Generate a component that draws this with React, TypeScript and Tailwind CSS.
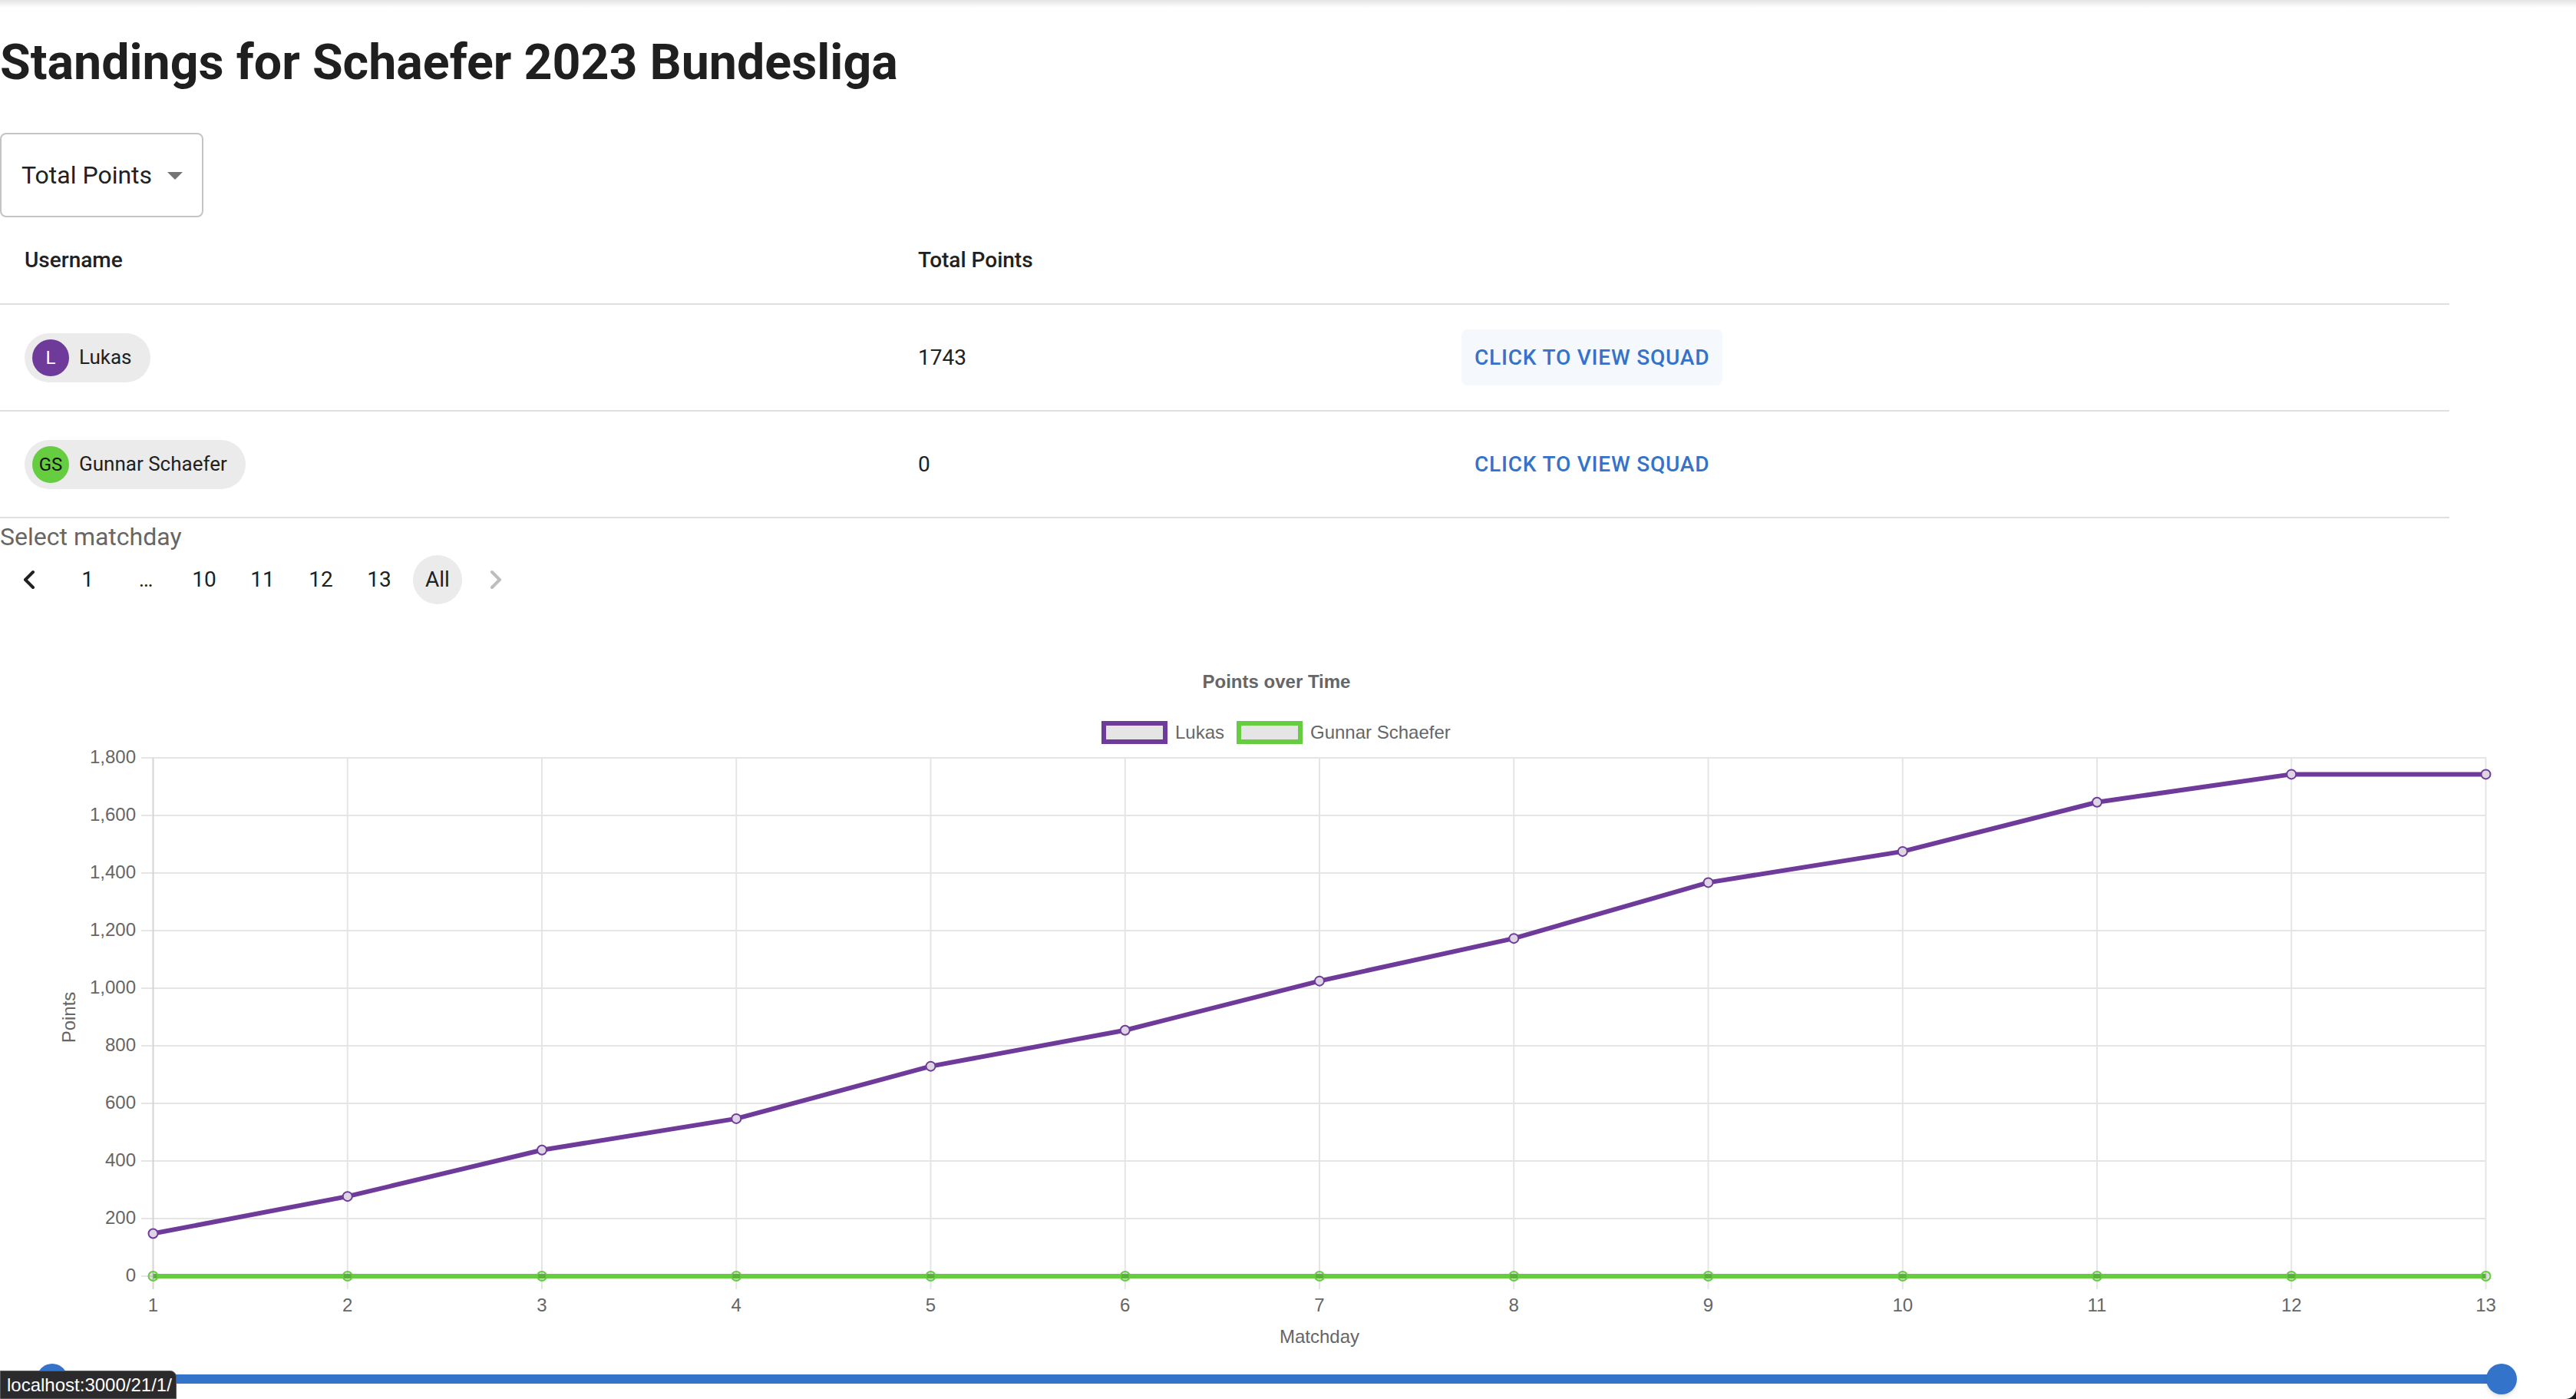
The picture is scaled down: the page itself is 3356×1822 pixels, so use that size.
import React from 'react';
import { ChevronLeft, ChevronRight } from 'lucide-react';

const purple = '#6f3b9a';
const green = '#66cc40';
const blue = '#3473ca';

type Row = {
  name: string;
  initials: string;
  avatarBg: string;
  avatarText: string;
  points: number;
  hovered?: boolean;
};

const rows: Row[] = [
  { name: 'Lukas', initials: 'L', avatarBg: purple, avatarText: 'text-white', points: 1743, hovered: true },
  { name: 'Gunnar Schaefer', initials: 'GS', avatarBg: green, avatarText: 'text-[#111]', points: 0 },
];

const pages = ['prev', '1', '…', '10', '11', '12', '13', 'All', 'next'];

// points per matchday, read off the chart
const lukasPoints = [148, 277, 438, 547, 729, 854, 1025, 1173, 1367, 1475, 1646, 1743, 1743];
const ticks = [0, 200, 400, 600, 800, 1000, 1200, 1400, 1600, 1800];

const xAt = (i: number) => 199.5 + i * 253.25;
const yAt = (v: number) => 1663 - v * 0.375;

function PointsChart() {
  const purpleLine = lukasPoints.map((v, i) => `${xAt(i)},${yAt(v)}`).join(' ');

  return (
    <svg
      width={3356}
      height={982}
      viewBox="0 788 3356 982"
      className="block"
      fontFamily="'Liberation Sans', Arial, sans-serif"
    >
      <text x={1663} y={888} textAnchor="middle" dominantBaseline="central" fontSize={24} fontWeight={700} fill="#666">
        Points over Time
      </text>

      {/* legend */}
      <rect x={1438} y={943} width={80} height={24} fill="#e5e5e5" stroke={purple} strokeWidth={6} />
      <text x={1531} y={954} dominantBaseline="central" fontSize={24} fill="#666">Lukas</text>
      <rect x={1614} y={943} width={80} height={24} fill="#e5e5e5" stroke={green} strokeWidth={6} />
      <text x={1707} y={954} dominantBaseline="central" fontSize={24} fill="#666">Gunnar Schaefer</text>

      {/* y grid + labels */}
      {ticks.map(v => (
        <g key={v}>
          <line x1={184} x2={3239} y1={yAt(v)} y2={yAt(v)} stroke="#e5e5e5" strokeWidth={2} />
          <text x={177} y={yAt(v) - 2} textAnchor="end" dominantBaseline="central" fontSize={24} fill="#666">
            {v.toLocaleString('en-US')}
          </text>
        </g>
      ))}

      {/* x grid + labels */}
      {lukasPoints.map((_, i) => (
        <g key={i}>
          <line
            x1={xAt(i)}
            x2={xAt(i)}
            y1={988}
            y2={1680}
            stroke={i === 0 ? '#d4d4d4' : '#e5e5e5'}
            strokeWidth={2}
          />
          <text x={xAt(i)} y={1700} textAnchor="middle" dominantBaseline="central" fontSize={24} fill="#666">
            {i + 1}
          </text>
        </g>
      ))}

      <text
        x={89}
        y={1326}
        textAnchor="middle"
        dominantBaseline="central"
        fontSize={24}
        fill="#666"
        transform="rotate(-90 89 1326)"
      >
        Points
      </text>
      <text x={1719} y={1741} textAnchor="middle" dominantBaseline="central" fontSize={24} fill="#666">
        Matchday
      </text>

      {/* Gunnar Schaefer */}
      <line x1={xAt(0)} x2={xAt(12)} y1={yAt(0)} y2={yAt(0)} stroke={green} strokeWidth={6} />
      {lukasPoints.map((_, i) => (
        <circle key={i} cx={xAt(i)} cy={yAt(0)} r={6} fill="rgba(0,0,0,0.12)" stroke={green} strokeWidth={2} />
      ))}

      {/* Lukas */}
      <polyline points={purpleLine} fill="none" stroke={purple} strokeWidth={6} strokeLinejoin="round" />
      {lukasPoints.map((v, i) => (
        <circle key={i} cx={xAt(i)} cy={yAt(v)} r={6} fill="#ddd5e4" stroke={purple} strokeWidth={2} />
      ))}
    </svg>
  );
}

export default function App() {
  return (
    <div className="relative h-[1822px] w-[3356px] overflow-hidden bg-white font-['Roboto','Liberation_Sans',sans-serif] text-[#212121]">
      {/* app bar shadow */}
      <div className="h-[10px] bg-linear-to-b from-[#e4e4e4] to-white" />

      <h1 className="mt-[29px] text-[64.5px] font-bold leading-[84px] text-[#1f1f1f]">
        Standings for Schaefer 2023 Bundesliga
      </h1>

      {/* Sort select */}
      <div className="mt-[50px] flex h-[110px] w-[265px] items-center rounded-[8px] border-2 border-[#c4c4c4] pl-[26px]">
        <span className="text-[32px] leading-[48px] text-[#212121]">Total Points</span>
        <svg viewBox="0 0 24 24" className="ml-auto mr-[11px] h-[48px] w-[48px]" fill="#757575">
          <path d="M7 10l5 5 5-5z" />
        </svg>
      </div>

      {/* Standings table */}
      <table className="w-[3191px] table-fixed border-collapse">
        <colgroup>
          <col className="w-[1164px]" />
          <col className="w-[708px]" />
          <col />
        </colgroup>
        <thead>
          <tr className="border-b-2 border-[#e0e0e0]">
            <th className="px-[32px] py-[32px] text-left text-[28px] font-medium leading-[48px]">Username</th>
            <th className="px-[32px] py-[32px] text-left text-[28px] font-medium leading-[48px]">Total Points</th>
            <th className="px-[32px] py-[32px]" />
          </tr>
        </thead>
        <tbody>
          {rows.map(row => (
            <tr key={row.name} className="border-b-2 border-[#e0e0e0]">
              <td className="px-[32px] py-[32px] align-middle">
                <div className="inline-flex h-[64px] items-center rounded-full bg-[#ebebeb] pl-[10px] pr-[24px]">
                  <div
                    className={`flex h-[48px] w-[48px] items-center justify-center rounded-full text-[24px] ${row.avatarText}`}
                    style={{ backgroundColor: row.avatarBg }}
                  >
                    {row.initials}
                  </div>
                  <span className="ml-[13px] text-[26px] text-[#212121]">{row.name}</span>
                </div>
              </td>
              <td className="px-[32px] py-[32px] align-middle text-[28px] leading-[40px]">{row.points}</td>
              <td className="px-[32px] py-[32px] align-middle">
                <button
                  className={`inline-flex h-[73px] items-center rounded-[8px] px-[17px] text-[28px] font-medium uppercase tracking-[0.8px] text-[#3473ca] ${
                    row.hovered ? 'bg-[#f5f8fc]' : ''
                  }`}
                >
                  Click to view squad
                </button>
              </td>
            </tr>
          ))}
        </tbody>
      </table>

      {/* Matchday picker */}
      <div className="text-[32px] leading-[48px] text-[#666]">Select matchday</div>
      <div className="flex h-[64px] items-center">
        {pages.map(p => (
          <div
            key={p}
            className={`mx-[6px] flex h-[64px] w-[64px] items-center justify-center rounded-full text-[28px] ${
              p === 'All' ? 'bg-[#ebebeb]' : ''
            }`}
          >
            {p === 'prev' ? (
              <ChevronLeft size={40} strokeWidth={2.4} color="#212121" />
            ) : p === 'next' ? (
              <ChevronRight size={40} strokeWidth={2.4} color="#bdbdbd" />
            ) : (
              p
            )}
          </div>
        ))}
      </div>

      <PointsChart />

      {/* matchday range slider */}
      <div className="relative ml-[68px] h-[52px] w-[3191px]">
        <div className="absolute left-0 right-0 top-[21px] h-[12px] rounded-full" style={{ backgroundColor: blue }} />
        <div className="absolute left-[-20px] top-[7px] h-[40px] w-[40px] rounded-full bg-[#3473ca] shadow-md" />
        <div className="absolute right-[-20px] top-[7px] h-[40px] w-[40px] rounded-full bg-[#3473ca] shadow-md" />
      </div>

      {/* browser status bubble */}
      <div className="absolute bottom-0 left-0 flex h-[37px] w-[230px] items-center rounded-tr-[8px] border border-[#5a5a5a] bg-[#2b2b2d] pl-[8px] font-['Liberation_Sans',sans-serif] text-[24px] text-white">
        localhost:3000/21/1/
      </div>

      {/* window corner */}
      <div className="absolute bottom-0 right-0 h-[14px] w-[14px] bg-[#1c1c1c]">
        <div className="h-full w-full rounded-br-[14px] bg-white" />
      </div>
    </div>
  );
}
